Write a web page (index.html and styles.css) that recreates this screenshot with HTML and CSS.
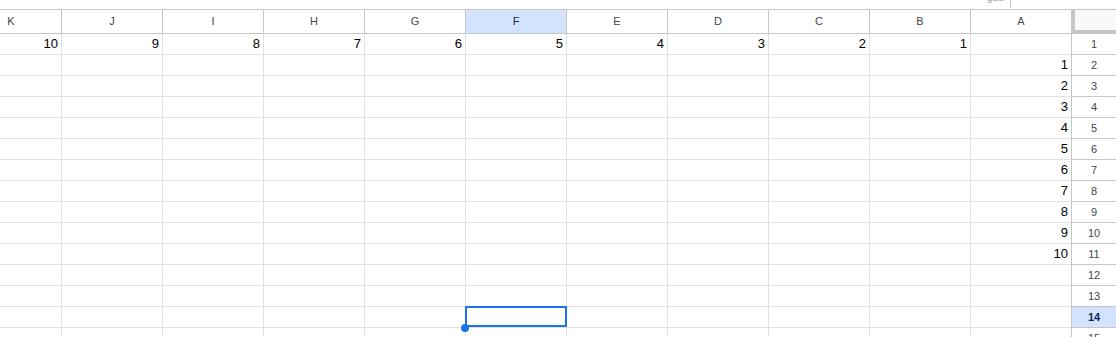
FILE: index.html
```html
<!DOCTYPE html>
<html lang="he">
<head>
<meta charset="utf-8">
<link rel="stylesheet" href="styles.css">
</head>
<body>
<div class="topbar"><span class="tiny">gaa</span><span class="vline"></span></div>
<div class="sheet">
  <div class="row head">
    <div class="rh corner"></div>
    <div class="ch">A</div><div class="ch">B</div><div class="ch">C</div><div class="ch">D</div><div class="ch">E</div><div class="ch sel">F</div><div class="ch">G</div><div class="ch">H</div><div class="ch">I</div><div class="ch">J</div><div class="ch">K</div>
  </div>
  <div class="row"><div class="rh">1</div><div class="c"></div><div class="c">1</div><div class="c">2</div><div class="c">3</div><div class="c">4</div><div class="c">5</div><div class="c">6</div><div class="c">7</div><div class="c">8</div><div class="c">9</div><div class="c">10</div></div>
  <div class="row"><div class="rh">2</div><div class="c">1</div><div class="c"></div><div class="c"></div><div class="c"></div><div class="c"></div><div class="c"></div><div class="c"></div><div class="c"></div><div class="c"></div><div class="c"></div><div class="c"></div></div>
  <div class="row"><div class="rh">3</div><div class="c">2</div><div class="c"></div><div class="c"></div><div class="c"></div><div class="c"></div><div class="c"></div><div class="c"></div><div class="c"></div><div class="c"></div><div class="c"></div><div class="c"></div></div>
  <div class="row"><div class="rh">4</div><div class="c">3</div><div class="c"></div><div class="c"></div><div class="c"></div><div class="c"></div><div class="c"></div><div class="c"></div><div class="c"></div><div class="c"></div><div class="c"></div><div class="c"></div></div>
  <div class="row"><div class="rh">5</div><div class="c">4</div><div class="c"></div><div class="c"></div><div class="c"></div><div class="c"></div><div class="c"></div><div class="c"></div><div class="c"></div><div class="c"></div><div class="c"></div><div class="c"></div></div>
  <div class="row"><div class="rh">6</div><div class="c">5</div><div class="c"></div><div class="c"></div><div class="c"></div><div class="c"></div><div class="c"></div><div class="c"></div><div class="c"></div><div class="c"></div><div class="c"></div><div class="c"></div></div>
  <div class="row"><div class="rh">7</div><div class="c">6</div><div class="c"></div><div class="c"></div><div class="c"></div><div class="c"></div><div class="c"></div><div class="c"></div><div class="c"></div><div class="c"></div><div class="c"></div><div class="c"></div></div>
  <div class="row"><div class="rh">8</div><div class="c">7</div><div class="c"></div><div class="c"></div><div class="c"></div><div class="c"></div><div class="c"></div><div class="c"></div><div class="c"></div><div class="c"></div><div class="c"></div><div class="c"></div></div>
  <div class="row"><div class="rh">9</div><div class="c">8</div><div class="c"></div><div class="c"></div><div class="c"></div><div class="c"></div><div class="c"></div><div class="c"></div><div class="c"></div><div class="c"></div><div class="c"></div><div class="c"></div></div>
  <div class="row"><div class="rh">10</div><div class="c">9</div><div class="c"></div><div class="c"></div><div class="c"></div><div class="c"></div><div class="c"></div><div class="c"></div><div class="c"></div><div class="c"></div><div class="c"></div><div class="c"></div></div>
  <div class="row"><div class="rh">11</div><div class="c">10</div><div class="c"></div><div class="c"></div><div class="c"></div><div class="c"></div><div class="c"></div><div class="c"></div><div class="c"></div><div class="c"></div><div class="c"></div><div class="c"></div></div>
  <div class="row"><div class="rh">12</div><div class="c"></div><div class="c"></div><div class="c"></div><div class="c"></div><div class="c"></div><div class="c"></div><div class="c"></div><div class="c"></div><div class="c"></div><div class="c"></div><div class="c"></div></div>
  <div class="row"><div class="rh">13</div><div class="c"></div><div class="c"></div><div class="c"></div><div class="c"></div><div class="c"></div><div class="c"></div><div class="c"></div><div class="c"></div><div class="c"></div><div class="c"></div><div class="c"></div></div>
  <div class="row"><div class="rh sel">14</div><div class="c"></div><div class="c"></div><div class="c"></div><div class="c"></div><div class="c"></div><div class="c active"><span class="box"></span><span class="handle"></span></div><div class="c"></div><div class="c"></div><div class="c"></div><div class="c"></div><div class="c"></div></div>
  <div class="row"><div class="rh">15</div><div class="c"></div><div class="c"></div><div class="c"></div><div class="c"></div><div class="c"></div><div class="c"></div><div class="c"></div><div class="c"></div><div class="c"></div><div class="c"></div><div class="c"></div></div>
</div>
</body>
</html>
```

FILE: styles.css
```css
html, body {
  margin: 0;
  padding: 0;
  background: #fff;
  overflow: hidden;
  width: 1116px;
  height: 337px;
  font-family: "Liberation Sans", Arial, sans-serif;
}
.topbar {
  height: 9px;
  position: relative;
  overflow: hidden;
}
.tiny {
  position: absolute;
  left: 987px;
  top: -8px;
  font-size: 10px;
  color: #9aa0a6;
}
.vline {
  position: absolute;
  left: 1010px;
  top: 0;
  width: 1px;
  height: 8px;
  background: #c4c7c5;
}
.sheet {
  direction: rtl;
  width: 1116px;
}
.row {
  display: flex;
  height: 21px;
}
.row.head {
  height: 25px;
}
.rh, .c, .ch {
  flex: none;
  box-sizing: border-box;
}
.rh {
  width: 45px;
  border-left: 1px solid #c4c7c5;
  border-bottom: 1px solid #c4c7c5;
  font-size: 11px;
  color: #444746;
  text-align: center;
  line-height: 20px;
  direction: ltr;
}
.rh.sel {
  background: #d3e3fd;
  color: #0b2a5c;
  font-weight: bold;
}
.head .rh, .ch {
  border-top: 1px solid #c4c7c5;
  border-bottom: 1px solid #c4c7c5;
  height: 25px;
  line-height: 23px;
}
.corner {
  background: #f8f9fa;
  border-left: 4px solid #c4c7c5;
  border-bottom: 4px solid #c4c7c5 !important;
}
.ch {
  width: 101px;
  border-left: 1px solid #c4c7c5;
  font-size: 11px;
  color: #444746;
  text-align: center;
}
.ch.sel {
  background: #d3e3fd;
  color: #0b2a5c;
}
.c {
  width: 101px;
  border-left: 1px solid #e1e1e1;
  border-bottom: 1px solid #e1e1e1;
  font-size: 13px;
  color: #000;
  line-height: 20px;
  padding-right: 3px;
  direction: ltr;
  text-align: right;
}
.c.active {
  position: relative;
}
.box {
  position: absolute;
  left: -1px;
  top: -1px;
  width: 102px;
  height: 21px;
  box-sizing: border-box;
  border: 2px solid #1a73e8;
}
.handle {
  position: absolute;
  left: -5px;
  top: 17px;
  width: 8px;
  height: 8px;
  border-radius: 50%;
  background: #1a73e8;
}
```
